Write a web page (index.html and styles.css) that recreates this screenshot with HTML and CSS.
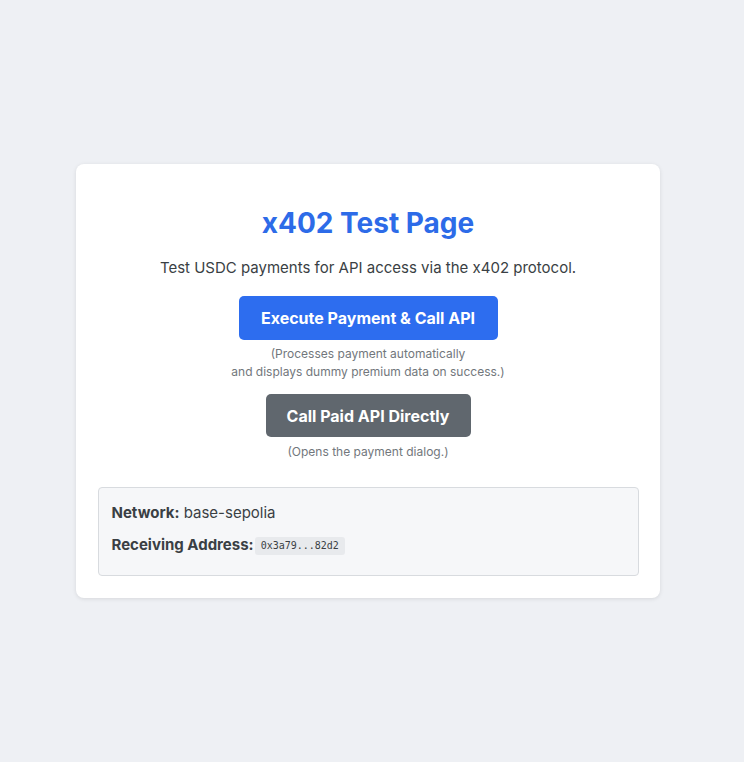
FILE: index.html
```html
<!DOCTYPE html>
<html lang="en">
<head>
<meta charset="utf-8">
<title>x402 Test Page</title>
<link rel="stylesheet" href="styles.css">
</head>
<body>
<main class="card">
  <h1 class="title">x402 Test Page</h1>
  <p class="lead">Test USDC payments for API access via the x402 protocol.</p>
  <button class="btn btn-primary">Execute Payment &amp; Call API</button>
  <p class="note">(Processes payment automatically<br>and displays dummy premium data on success.)</p>
  <button class="btn btn-secondary">Call Paid API Directly</button>
  <p class="note note-last">(Opens the payment dialog.)</p>
  <section class="info">
    <p class="info-row"><strong>Network:</strong> base-sepolia</p>
    <p class="info-row"><strong>Receiving Address:</strong><code class="addr">0x3a79...82d2</code></p>
  </section>
</main>
</body>
</html>
```
FILE: styles.css
```css
html, body {
  margin: 0;
  padding: 0;
}
body {
  background: #eef0f4;
  font-family: Inter, "Noto Sans", "Liberation Sans", sans-serif;
  color: #333a40;
  min-height: 100vh;
  box-sizing: border-box;
  padding-right: 9px;
  display: flex;
  align-items: center;
  justify-content: center;
}
.card {
  width: 584px;
  box-sizing: border-box;
  background: #ffffff;
  border-radius: 8px;
  box-shadow: 0 1px 4px rgba(0, 0, 0, 0.1);
  padding: 41px 21px 22px 22px;
  display: flex;
  flex-direction: column;
  align-items: center;
  text-align: center;
}
.title {
  margin: 0;
  font-size: 28px;
  line-height: 36px;
  font-weight: 700;
  color: #2d6be8;
}
.lead {
  margin: 16px 0 0;
  font-size: 15px;
  line-height: 22px;
  color: #3a3f44;
}
.btn {
  border: none;
  border-radius: 5px;
  color: #ffffff;
  font-family: inherit;
  font-size: 16px;
  font-weight: 700;
  height: 44px;
  padding: 0 21px;
  cursor: pointer;
}
.btn-primary {
  margin-top: 17px;
  background: #2d6def;
  width: 259px;
}
.btn-secondary {
  margin-top: 13px;
  background: #60676e;
  width: 205px;
  height: 43px;
}
.note {
  margin: 5px 0 0;
  font-size: 12px;
  line-height: 18px;
  color: #72777c;
}
.note-last {
  margin-top: 6px;
}
.info {
  align-self: stretch;
  margin-top: 26px;
  background: #f6f7f9;
  border: 1px solid #d8dbdf;
  border-radius: 4px;
  padding: 14px 13px 19px;
  text-align: left;
}
.info-row {
  margin: 0;
  font-size: 15px;
  line-height: 22px;
  color: #3a3f44;
}
.info-row + .info-row {
  margin-top: 10px;
}
.info-row strong {
  font-weight: 700;
}
.addr {
  display: inline-block;
  margin-left: 1px;
  background: #e8eaed;
  border-radius: 3px;
  padding: 0 6px;
  font-family: "DejaVu Sans Mono", "Liberation Mono", monospace;
  font-size: 10px;
  line-height: 18px;
  color: #3a3f44;
  vertical-align: 1px;
}
```
